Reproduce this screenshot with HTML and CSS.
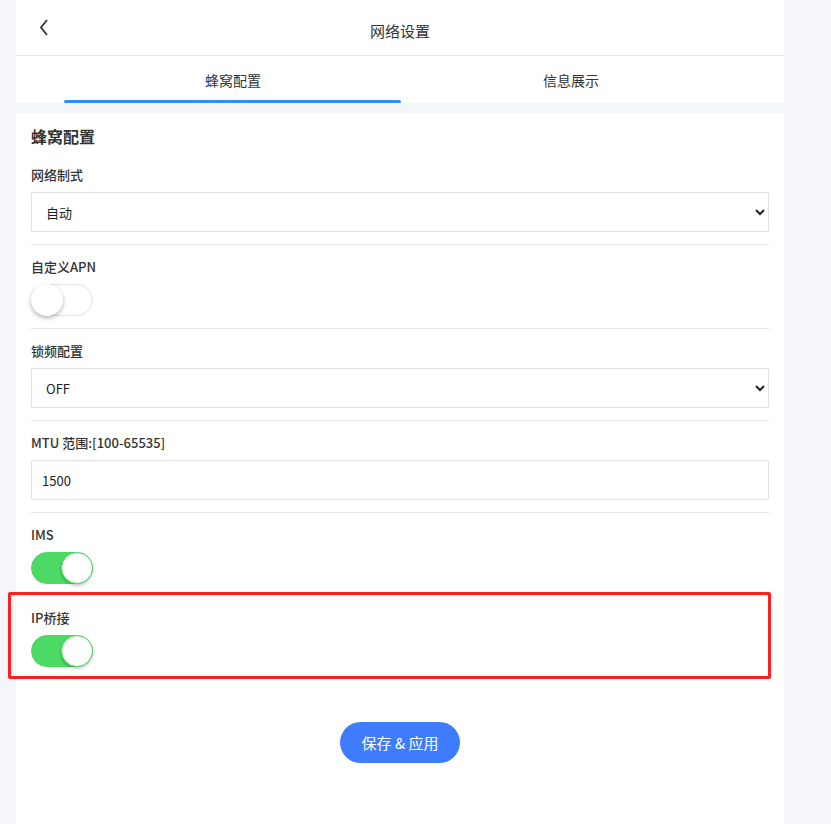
FILE: index.html
```html
<!DOCTYPE html>
<html lang="zh-CN">
<head>
    <meta charset="UTF-8">
    <meta name="viewport" content="width=device-width, initial-scale=1.0">
    <title>网络设置</title>
    <link rel="stylesheet" href="styles.css">
</head>
<body>
    <div class="page">
        <div class="header">
            <span class="back">
                <svg width="10" height="17" viewBox="0 0 10 17"><polyline points="8,1 2,8.5 8,16" fill="none" stroke="#333" stroke-width="1.8"/></svg>
            </span>
            <span class="header-title">网络设置</span>
        </div>
        <div class="tabs">
            <div class="tab active">蜂窝配置</div>
            <div class="tab">信息展示</div>
        </div>

        <div class="card">
            <div class="card-title">蜂窝配置</div>

            <div class="form-item">
                <div class="form-label">网络制式</div>
                <select class="form-select">
                    <option>自动</option>
                </select>
            </div>

            <div class="form-item">
                <div class="form-label">自定义APN</div>
                <label class="switch"><input type="checkbox"><span class="slider"></span></label>
            </div>

            <div class="form-item">
                <div class="form-label">锁频配置</div>
                <select class="form-select">
                    <option>OFF</option>
                </select>
            </div>

            <div class="form-item">
                <div class="form-label">MTU 范围:[100-65535]</div>
                <input class="form-input" type="text" value="1500">
            </div>

            <div class="form-item last">
                <div class="form-label">IMS</div>
                <label class="switch"><input type="checkbox" checked><span class="slider"></span></label>
            </div>

            <div class="form-item last highlight">
                <div class="form-label">IP桥接</div>
                <label class="switch"><input type="checkbox" checked><span class="slider"></span></label>
            </div>

            <div class="actions">
                <button type="button" class="btn-save">保存 &amp; 应用</button>
            </div>
        </div>
    </div>
</body>
</html>
```
FILE: styles.css
```css
body {
    margin: 0;
    background-color: #f5f6fa;
    font-family: "Noto Sans CJK SC", "Noto Sans", sans-serif;
    color: #333;
}
.page {
    width: 768px;
    margin-left: 16px;
    min-height: 824px;
    display: flex;
    flex-direction: column;
}
.header {
    position: relative;
    height: 55px;
    background-color: #fff;
    border-bottom: 1px solid #e2e2e2;
    display: flex;
    align-items: center;
    justify-content: center;
}
.back {
    position: absolute;
    left: 23px;
    top: 19px;
    line-height: 0;
}
.header-title {
    font-size: 15px;
    margin-top: 6px;
}
.tabs {
    display: flex;
    background-color: #fff;
    padding: 0 44px 0 48px;
    height: 47px;
}
.tab {
    flex: 1;
    text-align: center;
    font-size: 14px;
    line-height: 48px;
    color: #333;
    position: relative;
}
.tab.active::after {
    content: "";
    position: absolute;
    left: 0;
    right: 1px;
    bottom: 0;
    height: 3px;
    border-radius: 2px;
    background-color: #2f8fff;
}
.card {
    flex: 1;
    margin-top: 10px;
    background-color: #fff;
    padding: 11px 15px 40px;
}
.card-title {
    font-size: 16px;
    font-weight: bold;
    line-height: 24px;
    margin-bottom: 5px;
}
.form-item {
    padding: 12px 0;
    border-bottom: 1px solid #e4e4e4;
}
.form-item.last {
    border-bottom: none;
}
.highlight {
    position: relative;
}
.highlight::before {
    content: "";
    position: absolute;
    left: -23px;
    right: -2px;
    top: -4px;
    bottom: 0;
    border: 3px solid #ff1f1f;
    border-radius: 2px;
}
.form-label {
    font-size: 13px;
    font-weight: 500;
    line-height: 20px;
    margin-bottom: 7px;
}
.form-select,
.form-input {
    display: block;
    width: 100%;
    height: 40px;
    box-sizing: border-box;
    border: 1px solid #e0e0e0;
    border-radius: 2px;
    background-color: #fff;
    font-family: "Noto Sans CJK SC", "Noto Sans", sans-serif;
    font-size: 13px;
    color: #222;
}
.form-select {
    padding: 0 8px 0 10px;
}
.form-input {
    padding: 0 10px;
}
.switch {
    position: relative;
    display: inline-block;
    width: 62px;
    height: 32px;
    vertical-align: top;
}
.switch input {
    display: none;
}
.slider {
    position: absolute;
    inset: 0;
    box-sizing: border-box;
    border: 1px solid #e2e2e2;
    border-radius: 16px;
    background-color: #fff;
}
.slider::before {
    content: "";
    position: absolute;
    left: -1px;
    top: -1px;
    width: 32px;
    height: 32px;
    box-sizing: border-box;
    border-radius: 50%;
    background-color: #fff;
    box-shadow: 0 2px 4px rgba(0, 0, 0, 0.3);
}
.switch input:checked + .slider {
    background-color: #4cd964;
    border-color: #4cd964;
}
.switch input:checked + .slider::before {
    left: 29px;
    border: 1px solid #4cd964;
    box-shadow: 0 2px 3px rgba(0, 0, 0, 0.2);
}
.actions {
    display: flex;
    justify-content: center;
    margin-top: 43px;
}
.btn-save {
    width: 120px;
    height: 41px;
    border: none;
    border-radius: 21px;
    background-color: #3f7bff;
    color: #fff;
    font-family: "Noto Sans CJK SC", "Noto Sans", sans-serif;
    font-size: 15px;
    cursor: pointer;
}
```
